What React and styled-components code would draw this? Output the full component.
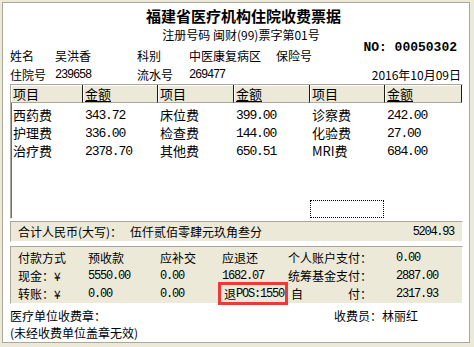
import React from 'react';
import styled, { createGlobalStyle } from 'styled-components';

const GlobalStyle = createGlobalStyle`
  html, body {
    margin: 0;
    padding: 0;
    background: #ece9d8;
  }
  body {
    font-family: "Noto Sans CJK SC", "Liberation Sans", sans-serif;
    font-size: 12px;
    color: #000;
  }
`;

const Window = styled.div`
  width: 474px;
  height: 347px;
  box-sizing: border-box;
  padding: 2px 4px 4px 2px;
  background: #ece9d8;
`;

const Panel = styled.div`
  width: 468px;
  height: 341px;
  box-sizing: border-box;
  border: 1px solid #aca899;
  background: #fff;
  padding: 4px 6px 0 7px;
  overflow: hidden;
`;

const Header = styled.div`
  display: grid;
  grid-template-columns: 1fr;
  grid-template-rows: 18px 20px 20px 18px;
`;

const Title = styled.div`
  grid-row: 1;
  grid-column: 1;
  text-align: center;
  padding-left: 14px;
  font-size: 15px;
  font-weight: bold;
  line-height: 18px;
`;

const Subtitle = styled.div`
  grid-row: 2;
  grid-column: 1;
  text-align: center;
  padding-left: 9px;
  line-height: 20px;
`;

const Serial = styled.div`
  grid-row: 2 / 4;
  grid-column: 1;
  justify-self: end;
  align-self: center;
  margin: 4px 6px 0 0;
  font-family: "Liberation Mono", monospace;
  font-size: 13px;
  font-weight: bold;
`;

const InfoRow = styled.div`
  grid-row: ${p => p.$row};
  grid-column: 1;
  display: grid;
  grid-template-columns: 45px 82px 52px 87px 1fr;
  align-items: center;
`;

const DateText = styled.span`
  justify-self: end;
  margin-right: 2px;
`;

// SimSun-like half-width digits: mono face squeezed to the old 6px pitch
const Num = styled.span`
  font-family: "Liberation Mono", monospace;
  font-size: ${p => p.$size || 12}px;
  letter-spacing: ${p => p.$spacing ?? -1.2}px;
  line-height: 1;
  padding-top: 1px;
`;

const Table = styled.div`
  margin-top: 1px;
  height: 135px;
  box-sizing: border-box;
  border: 1px solid;
  border-color: #aca899 #fff #fff #aca899;
  box-shadow: inset 1px 1px 0 #716f64;
  display: flex;
  flex-direction: column;
`;

const columns = '72px 75px 76px 76px 75px 77px';

const HeadRow = styled.div`
  display: grid;
  grid-template-columns: ${columns};
  height: 18px;
  background: #ece9d8;
`;

const HeadCell = styled.div`
  box-sizing: border-box;
  border-right: 1px solid #1c1c1c;
  border-bottom: 1px solid #aca899;
  box-shadow: inset 1px 1px 0 #fff;
  padding-left: 2px;
  font-size: 13px;
  line-height: 17px;
  text-decoration: ${p => (p.$underline ? 'underline' : 'none')};
  text-underline-offset: 2px;
`;

const Body = styled.div`
  flex: 1;
  display: flex;
  flex-direction: column;
  padding-top: 2px;
`;

const DataRow = styled.div`
  display: grid;
  grid-template-columns: ${columns};
  height: 18px;
  align-items: center;
  font-size: 13px;
`;

const DataCell = styled.div`
  display: flex;
  align-items: center;
  padding-left: 2px;
`;

const FocusRow = styled.div`
  margin-top: auto;
  display: grid;
  grid-template-columns: ${columns};
  height: 18px;
`;

const FocusBox = styled.div`
  grid-column: 5;
  width: 74px;
  box-sizing: border-box;
  border: 1px dotted #000;
`;

const Sunken = styled.div`
  box-sizing: border-box;
  border: 1px solid;
  border-color: #aca899 #fff #fff #aca899;
  background: #ece9d8;
`;

const TotalBar = styled(Sunken)`
  margin-top: 2px;
  height: 21px;
  display: flex;
  align-items: center;
  padding: 0 8px 0 7px;
`;

const TotalLabel = styled.span`
  min-width: 112px;
`;

const TotalAmount = styled(Num)`
  margin-left: auto;
`;

const PayBox = styled(Sunken)`
  margin-top: 4px;
  height: 58px;
  padding: 1px 0 0 7px;
  display: grid;
  grid-template-columns: 70px 72px 62px 66px 108px 1fr;
  grid-auto-rows: 18px;
  align-items: center;
`;

const RedMark = styled.span`
  justify-self: start;
  display: flex;
  align-items: center;
  margin: -3px 0 -3px -4px;
  padding: 0 1px 0 3px;
  height: 17px;
  border: 3px solid #ec3a3a;
  white-space: nowrap;
`;

const SplitLabel = styled.span`
  display: flex;
  justify-content: space-between;
  width: 81px;
  padding-left: 3px;
`;

const Footer = styled.div`
  margin-top: 3px;
  display: grid;
  grid-template-columns: 324px 1fr;
  grid-auto-rows: 17px;
  align-items: center;
`;

const Cashier = styled.span`
  word-spacing: 4px;
`;

const fees = [
  ['西药费', '343.72', '床位费', '399.00', '诊察费', '242.00'],
  ['护理费', '336.00', '检查费', '144.00', '化验费', '27.00'],
  ['治疗费', '2378.70', '其他费', '650.51', 'MRI费', '684.00'],
];

export default function App() {
  return (
    <Window>
      <GlobalStyle />
      <Panel>
        <Header>
          <Title>福建省医疗机构住院收费票据</Title>
          <Subtitle>注册号码 闽财(99)票字第01号</Subtitle>
          <Serial>NO: 00050302</Serial>
          <InfoRow $row={3}>
            <span>姓名</span>
            <span>吴洪香</span>
            <span>科别</span>
            <span>中医康复病区</span>
            <span>保险号</span>
          </InfoRow>
          <InfoRow $row={4}>
            <span>住院号</span>
            <Num>239658</Num>
            <span>流水号</span>
            <Num>269477</Num>
            <DateText>2016年10月09日</DateText>
          </InfoRow>
        </Header>

        <Table>
          <HeadRow>
            {['项目', '金额', '项目', '金额', '项目', '金额'].map((h, i) => (
              <HeadCell key={i} $underline={i % 2 === 1}>{h}</HeadCell>
            ))}
          </HeadRow>
          <Body>
            {fees.map((row, r) => (
              <DataRow key={r}>
                {row.map((v, i) => (
                  <DataCell key={i}>
                    {i % 2 === 1 ? <Num $size={13} $spacing={-1.1}>{v}</Num> : v}
                  </DataCell>
                ))}
              </DataRow>
            ))}
            <FocusRow>
              <FocusBox />
            </FocusRow>
          </Body>
        </Table>

        <TotalBar>
          <TotalLabel>合计人民币(大写)：</TotalLabel>
          <span>伍仟贰佰零肆元玖角叁分</span>
          <TotalAmount $spacing={-1.3}>5204.93</TotalAmount>
        </TotalBar>

        <PayBox>
          <span>付款方式</span>
          <span>预收款</span>
          <span>应补交</span>
          <span>应退还</span>
          <span>个人账户支付：</span>
          <Num>0.00</Num>

          <span>现金：¥</span>
          <Num>5550.00</Num>
          <Num>0.00</Num>
          <Num>1682.07</Num>
          <span>统筹基金支付：</span>
          <Num>2887.00</Num>

          <span>转账：¥</span>
          <Num>0.00</Num>
          <Num>0.00</Num>
          <RedMark>退<Num>POS:1550</Num></RedMark>
          <SplitLabel><span>自</span><span>付：</span></SplitLabel>
          <Num>2317.93</Num>
        </PayBox>

        <Footer>
          <span>医疗单位收费章：</span>
          <Cashier>收费员：林丽红</Cashier>
          <span>(未经收费单位盖章无效)</span>
        </Footer>
      </Panel>
    </Window>
  );
}
